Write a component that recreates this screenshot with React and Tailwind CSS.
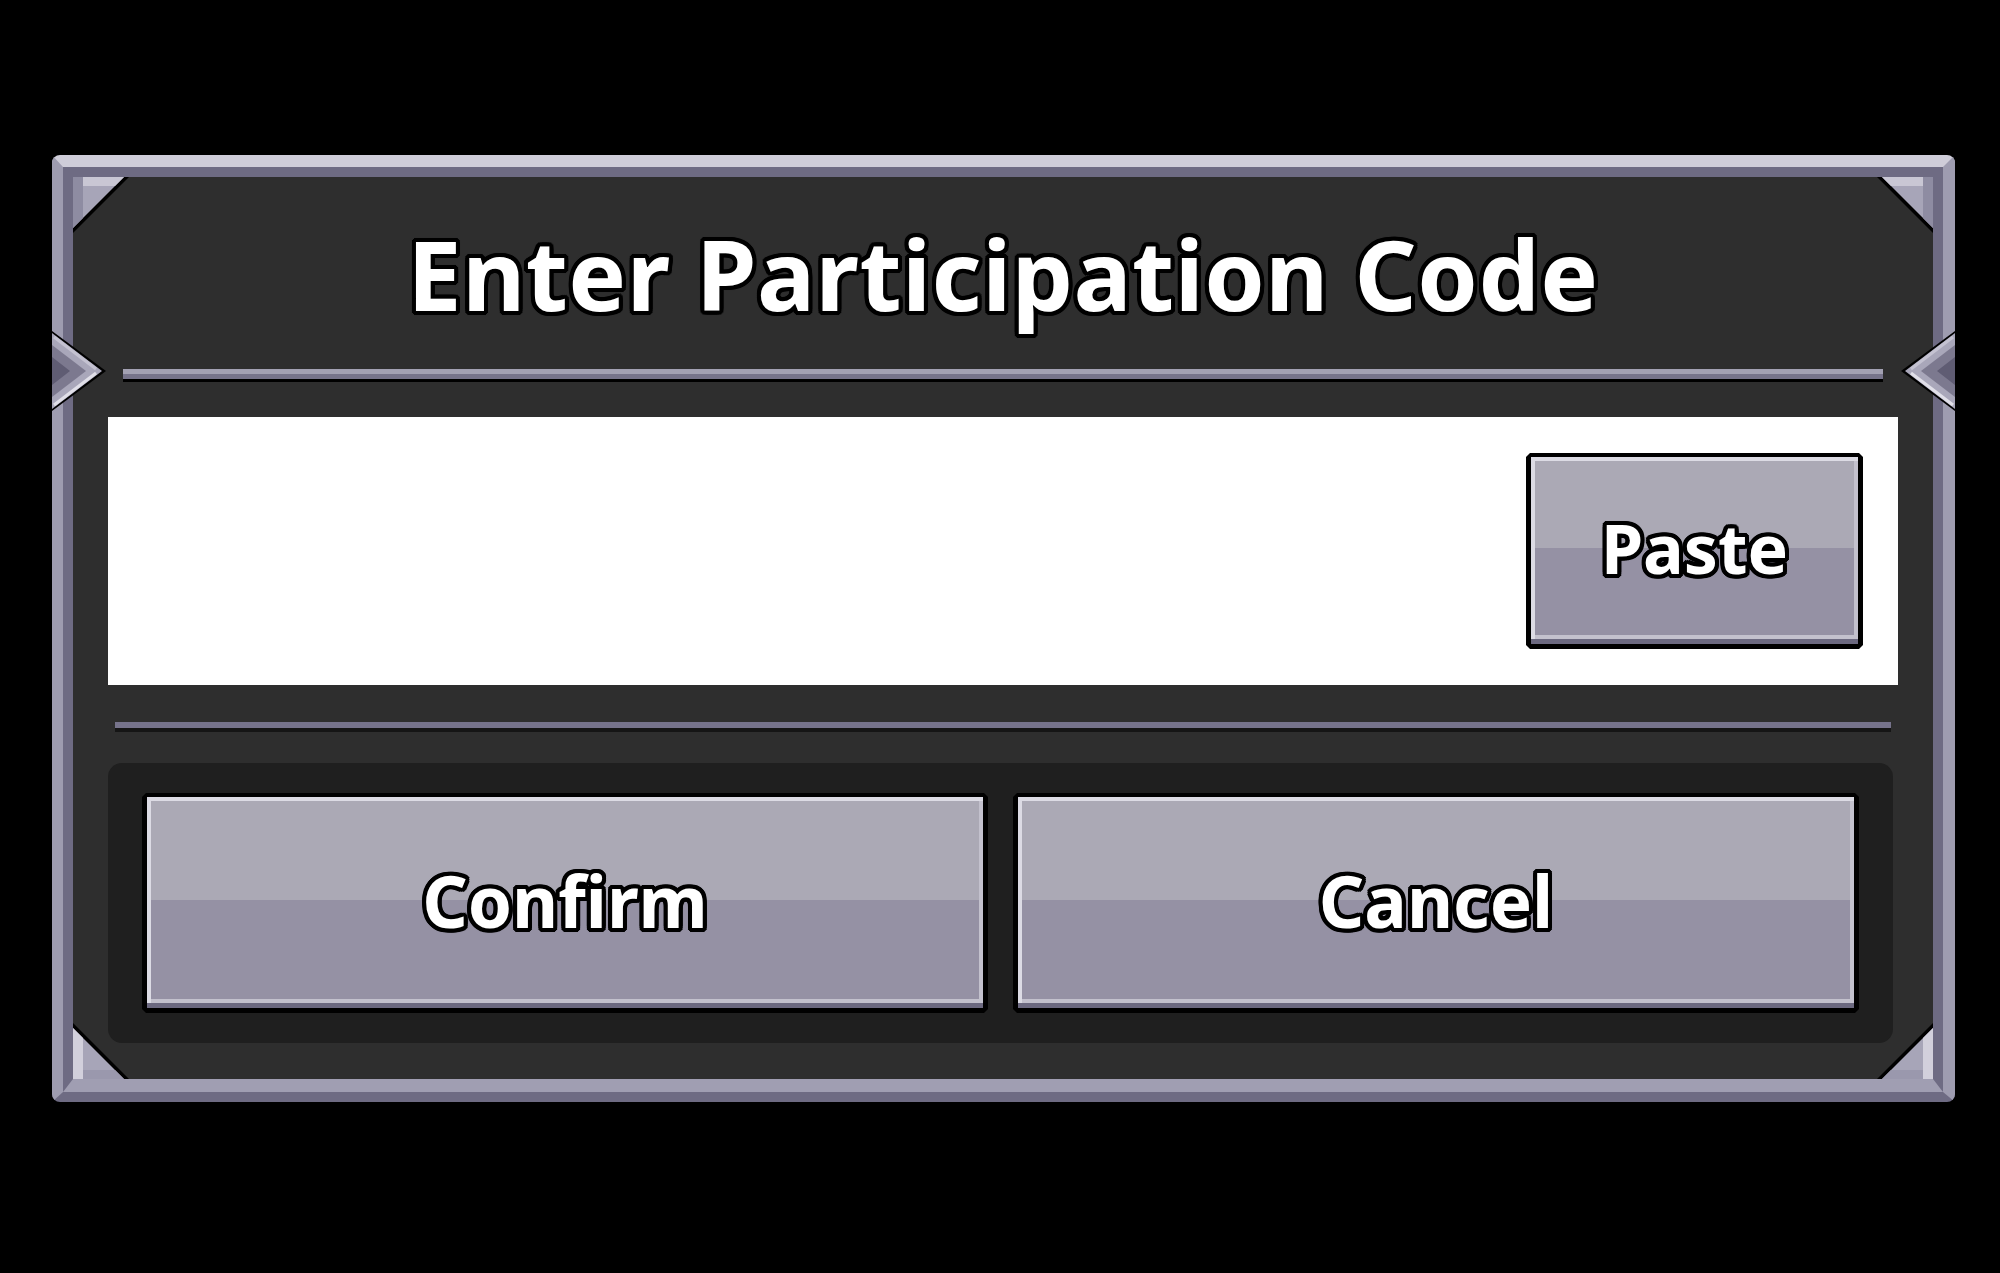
import React from "react";

const outline =
  "[text-shadow:4px_0_0_#000,-4px_0_0_#000,0_4px_0_#000,0_-4px_0_#000,3px_3px_0_#000,-3px_3px_0_#000,3px_-3px_0_#000,-3px_-3px_0_#000,4px_2px_0_#000,-4px_2px_0_#000,4px_-2px_0_#000,-4px_-2px_0_#000,2px_4px_0_#000,-2px_4px_0_#000,2px_-4px_0_#000,-2px_-4px_0_#000,0_0_4px_#000]";

function GameButton({ label, className, textClass }) {
  return (
    <div
      className={`bg-black px-[5px] pt-[4px] pb-[5px] [clip-path:polygon(4px_0,calc(100%_-_4px)_0,100%_4px,100%_calc(100%_-_4px),calc(100%_-_4px)_100%,4px_100%,0_calc(100%_-_4px),0_4px)] ${className}`}
    >
      <div className="flex h-full w-full items-center justify-center border-b-[5px] border-[#6c6980] bg-[linear-gradient(to_bottom,#aba9b5_0%,#aba9b5_50%,#9591a4_50%,#9591a4_100%)] shadow-[inset_4px_4px_0_#dcdbe4,inset_-4px_-4px_0_#c3c1cd]">
        <span
          className={`font-['Noto_Sans',sans-serif] font-bold leading-none text-white ${textClass} ${outline}`}
        >
          {label}
        </span>
      </div>
    </div>
  );
}

function Corner({ className, bottom }) {
  return (
    <svg
      className={`pointer-events-none absolute ${className}`}
      width="58"
      height="58"
      viewBox="0 0 58 58"
    >
      <polygon points="0,0 56,0 0,56" fill="#000" />
      <polygon points="0,0 51,0 0,51" fill="#a7a5b8" />
      <polygon points="0,0 51,0 42,9 0,9" fill={bottom ? "#9a98ad" : "#c9c7d4"} />
      <polygon points="0,0 10,0 10,41 0,51" fill={bottom ? "#d2d0dc" : "#8e8ca2"} />
    </svg>
  );
}

function Chevron({ className }) {
  return (
    <svg
      className={`pointer-events-none absolute ${className}`}
      width="58"
      height="80"
      viewBox="0 0 58 80"
    >
      <polygon points="0,0 54,40 0,80" fill="#000" />
      <polygon points="0,2 50,40 0,78" fill="#a9a7ba" />
      <polygon points="0,14 34,40 0,66" fill="#7c798f" />
      <polygon points="0,26 18,40 0,54" fill="#5f5c73" />
      <line x1="2" y1="6" x2="44" y2="38" stroke="#c4c2d1" strokeWidth="3" />
      <line x1="2" y1="74" x2="44" y2="42" stroke="#e0dfe8" strokeWidth="3" />
    </svg>
  );
}

export default function App() {
  return (
    <div className="h-[1273px] w-[2000px] bg-black pl-[52px] pt-[155px]">
      <div className="w-[1903px] rounded-[8px] border-t-[12px] border-r-[12px] border-b-[10px] border-l-[11px] border-t-[#cfcdd9] border-r-[#9e9cb0] border-b-[#6e6b83] border-l-[#9e9cb0]">
        <div className="border-t-[10px] border-r-[10px] border-b-[13px] border-l-[10px] border-t-[#6e6b83] border-r-[#6e6b83] border-b-[#a09eb2] border-l-[#6e6b83]">
          <div className="relative flex h-[902px] flex-col bg-[#2e2e2e]">
            <Corner className="left-0 top-0" />
            <Corner className="right-0 top-0 -scale-x-100" />
            <Corner className="bottom-0 left-0 -scale-y-100" bottom />
            <Corner className="bottom-0 right-0 -scale-x-100 -scale-y-100" bottom />
            <Chevron className="left-[-21px] top-[154px]" />
            <Chevron className="right-[-22px] top-[154px] -scale-x-100" />

            <div className="flex h-[192px] items-center justify-center">
              <span
                className={`font-['Noto_Sans',sans-serif] text-[97px] font-bold leading-none tracking-[0.5px] text-white ${outline}`}
              >
                Enter Participation Code
              </span>
            </div>

            <div className="mx-[50px] h-[10px] bg-[linear-gradient(to_bottom,#a3a1b3_0%,#a3a1b3_50%,#77748b_50%,#77748b_100%)] shadow-[0_3px_0_#000]" />

            <div className="mx-[35px] mt-[38px] flex h-[268px] items-center justify-end bg-white pr-[35px]">
              <GameButton label="Paste" className="h-[196px] w-[337px]" textClass="text-[68px]" />
            </div>

            <div className="mx-[42px] mt-[37px] h-[6px] bg-[#76738b] shadow-[0_4px_0_#151515]" />

            <div className="ml-[35px] mr-[40px] mt-[35px] flex h-[280px] gap-[25px] rounded-[14px] bg-[#1f1f1f] px-[34px] py-[30px]">
              <GameButton label="Confirm" className="h-full flex-1" textClass="text-[71px]" />
              <GameButton label="Cancel" className="h-full flex-1" textClass="text-[71px]" />
            </div>
          </div>
        </div>
      </div>
    </div>
  );
}
